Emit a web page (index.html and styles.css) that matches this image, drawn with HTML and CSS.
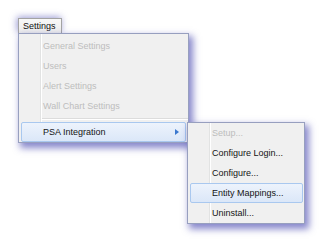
FILE: index.html
```html
<!DOCTYPE html>
<html lang="en">
<head>
  <meta charset="UTF-8" />
  <title>Settings menu</title>
  <link rel="stylesheet" href="styles.css">
</head>
<body>

  <div class="stage">

    <!-- Menu bar -->
    <div class="menubar">
      <span class="tab">Settings</span>
    </div>

    <!-- Settings menu -->
    <div class="menu main">
      <div class="item disabled">General Settings</div>
      <div class="item disabled">Users</div>
      <div class="item disabled">Alert Settings</div>
      <div class="item disabled">Wall Chart Settings</div>
      <div class="sep"></div>
      <div class="item active has-sub">
        PSA Integration
        <span class="arrow"></span>

        <!-- PSA submenu -->
        <div class="menu sub">
          <div class="item disabled">Setup...</div>
          <div class="item">Configure Login...</div>
          <div class="item">Configure...</div>
          <div class="item active">Entity Mappings...</div>
          <div class="item">Uninstall...</div>
        </div>
      </div>
    </div>

  </div>

</body>
</html>
```

FILE: styles.css
```css
html, body {
  min-height: 100vh;
}
body {
  margin: 0;
  padding: 0;
  background: #fff;
  font-family: "Liberation Sans", Arial, sans-serif;
  font-size: 9px;
  color: #141414;
}

.stage {
  min-height: 243px;
  box-sizing: border-box;
  padding: 18px 0 0 18px;
}

/* Menu bar tab */
.menubar {
  height: 15px;
}
.tab {
  display: inline-block;
  box-sizing: border-box;
  width: 44px;
  height: 15px;
  line-height: 14px;
  padding-left: 4px;
  background: linear-gradient(#f8f8f8, #ececec);
  border: 1px solid #a3a3a3;
  border-bottom: none;
  color: #111;
  box-shadow: -1px -1px 7px rgba(70, 70, 175, 0.55);
}

/* Menus */
.menu {
  box-sizing: border-box;
  background: linear-gradient(to right,
    #f0f0f0 21px, #e2e3e3 21px, #e2e3e3 22px,
    #ffffff 22px, #ffffff 23px, #f0f0f0 23px);
  border: 1px solid #979fbf;
  box-shadow: 3px 4px 7px 1px rgba(70, 70, 175, 0.65);
}
.main {
  position: relative;
  width: 171px;
  padding-top: 2px;
}
.sub {
  position: absolute;
  left: 165px;
  top: -1px;
  width: 118px;
  z-index: 2;
}

.item {
  position: relative;
  height: 18px;
  line-height: 18px;
  margin: 0 2px;
  padding-left: 21px;
  border: 1px solid transparent;
  border-radius: 2px;
  white-space: nowrap;
}
.sub .item {
  margin: 0 1px 0 2px;
}
.item.disabled {
  color: #bdbdbd;
}
.item.active {
  background: linear-gradient(#edf3fc, #dbe7f8);
  border-color: #a9c8ef;
}

.sep {
  height: 6px;
  margin-left: 23px;
  background: linear-gradient(#f0f0f0 2px, #dcdcdc 2px, #dcdcdc 3px, #fff 3px, #fff 4px, #f0f0f0 4px);
}

.arrow {
  position: absolute;
  right: 6px;
  top: 6px;
  width: 0;
  height: 0;
  border-top: 3.5px solid transparent;
  border-bottom: 3.5px solid transparent;
  border-left: 4px solid #3b78cf;
}
```
